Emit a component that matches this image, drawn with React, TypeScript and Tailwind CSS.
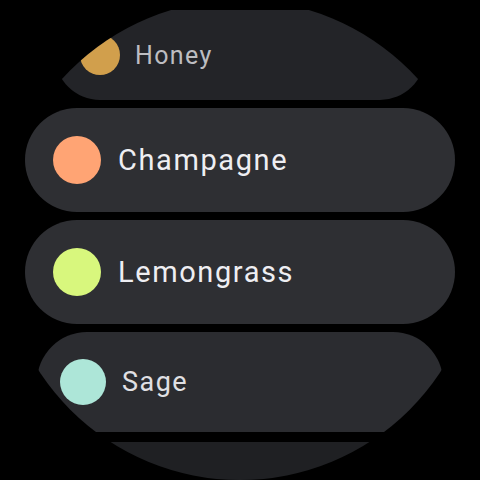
import React from "react";

type Item = {
  name: string;
  dot: string;
  card: string;
  dotCls: string;
  textCls: string;
};

const items: Item[] = [
  {
    name: "Honey",
    dot: "bg-[#d19f4c]",
    card: "w-[370px] h-[90px] bg-[#232428] pl-[25px] gap-[15px]",
    dotCls: "w-[40px] h-[40px]",
    textCls: "text-[25px] text-[#bdbdc1]",
  },
  {
    name: "Champagne",
    dot: "bg-[#ffa474]",
    card: "w-[430px] h-[104px] bg-[#2e2f33] pl-[28px] gap-[17px]",
    dotCls: "w-[48px] h-[48px]",
    textCls: "text-[29px] text-[#eeeef2]",
  },
  {
    name: "Lemongrass",
    dot: "bg-[#d8f77d]",
    card: "w-[430px] h-[104px] bg-[#2e2f33] pl-[28px] gap-[17px]",
    dotCls: "w-[48px] h-[48px]",
    textCls: "text-[29px] text-[#eeeef2]",
  },
  {
    name: "Sage",
    dot: "bg-[#ade6d8]",
    card: "w-[406px] h-[100px] bg-[#2b2c30] pl-[23px] gap-[16px]",
    dotCls: "w-[46px] h-[46px]",
    textCls: "text-[27px] text-[#e0e0e4]",
  },
];

export default function App() {
  return (
    <div className="w-[480px] h-[480px] bg-black">
      <div
        className="w-[480px] h-[480px] rounded-full overflow-hidden bg-black flex flex-col items-center gap-2 pt-[10px]"
        style={{ fontFamily: "Roboto, 'Noto Sans', sans-serif" }}
      >
        {items.map((it) => (
          <div
            key={it.name}
            className={`shrink-0 rounded-full flex items-center ${it.card}`}
          >
            <div className={`shrink-0 rounded-full ${it.dotCls} ${it.dot}`} />
            <span className={`font-normal tracking-[0.055em] leading-none ${it.textCls}`}>
              {it.name}
            </span>
          </div>
        ))}
        <div className="shrink-0 rounded-full w-[380px] h-[90px] bg-[#1f2023] mt-[2px]" />
      </div>
    </div>
  );
}
